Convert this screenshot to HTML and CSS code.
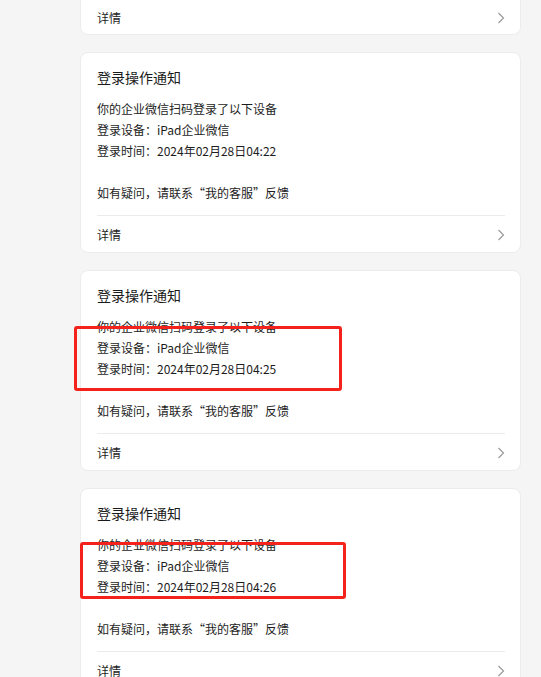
FILE: index.html
```html
<!DOCTYPE html>
<html lang="zh-CN">
<head>
<meta charset="utf-8">
<link rel="stylesheet" href="styles.css">
</head>
<body>
<div class="feed">
  <div class="card partial">
    <div class="footer"><span>详情</span><svg class="chev" width="8" height="12" viewBox="0 0 8 12"><polyline points="1.5,1 6.5,6 1.5,11" fill="none" stroke="#9a9a9a" stroke-width="1.2"/></svg></div>
  </div>
  <div class="card">
    <div class="title">登录操作通知</div>
    <div class="body">
      <div class="line">你的企业微信扫码登录了以下设备</div>
      <div class="line">登录设备：iPad企业微信</div>
      <div class="line">登录时间：2024年02月28日04:22</div>
      <div class="line blank"></div>
      <div class="line">如有疑问，请联系“我的客服”反馈</div>
    </div>
    <div class="footer"><span>详情</span><svg class="chev" width="8" height="12" viewBox="0 0 8 12"><polyline points="1.5,1 6.5,6 1.5,11" fill="none" stroke="#9a9a9a" stroke-width="1.2"/></svg></div>
  </div>
  <div class="card">
    <div class="mark mark-a"></div>
    <div class="title">登录操作通知</div>
    <div class="body">
      <div class="line">你的企业微信扫码登录了以下设备</div>
      <div class="line">登录设备：iPad企业微信</div>
      <div class="line">登录时间：2024年02月28日04:25</div>
      <div class="line blank"></div>
      <div class="line">如有疑问，请联系“我的客服”反馈</div>
    </div>
    <div class="footer"><span>详情</span><svg class="chev" width="8" height="12" viewBox="0 0 8 12"><polyline points="1.5,1 6.5,6 1.5,11" fill="none" stroke="#9a9a9a" stroke-width="1.2"/></svg></div>
  </div>
  <div class="card">
    <div class="mark mark-b"></div>
    <div class="title">登录操作通知</div>
    <div class="body">
      <div class="line">你的企业微信扫码登录了以下设备</div>
      <div class="line">登录设备：iPad企业微信</div>
      <div class="line">登录时间：2024年02月28日04:26</div>
      <div class="line blank"></div>
      <div class="line">如有疑问，请联系“我的客服”反馈</div>
    </div>
    <div class="footer"><span>详情</span><svg class="chev" width="8" height="12" viewBox="0 0 8 12"><polyline points="1.5,1 6.5,6 1.5,11" fill="none" stroke="#9a9a9a" stroke-width="1.2"/></svg></div>
  </div>
</div>
</body>
</html>
```

FILE: styles.css
```css
html, body {
  margin: 0;
  padding: 0;
  background: #f5f5f5;
  overflow: hidden;
  height: 677px;
}
body {
  font-family: "Noto Sans CJK SC", "Microsoft YaHei", sans-serif;
  color: #1d1d1d;
}
.feed {
  display: flex;
  flex-direction: column;
  gap: 17px;
  padding-left: 80px;
  width: 441px;
}
.card {
  position: relative;
  box-sizing: border-box;
  width: 441px;
  height: 201px;
  background: #fff;
  border: 1px solid #ececec;
  border-radius: 8px;
  padding: 14px 15px 0 16px;
  display: flex;
  flex-direction: column;
}
.card.partial {
  height: 35px;
  border-top: none;
  border-top-left-radius: 0;
  border-top-right-radius: 0;
  padding-top: 0;
}
.card.partial .footer {
  margin-top: 0;
  border-top: none;
  height: 34px;
}
.title {
  font-size: 14px;
  line-height: 20px;
  color: #1a1a1a;
}
.body {
  margin-top: 11px;
  font-size: 12px;
  line-height: 21px;
  color: #1d1d1d;
}
.line.blank {
  height: 21px;
}
.footer {
  margin-top: 12px;
  border-top: 1px solid #ebebeb;
  height: 37px;
  display: flex;
  align-items: center;
  justify-content: space-between;
  font-size: 12px;
  color: #1d1d1d;
}
.chev {
  display: block;
  margin-top: 2px;
}
.mark {
  position: absolute;
  border: 3px solid #f5221c;
  border-radius: 3px;
  box-sizing: border-box;
}
.mark-a {
  left: -7px;
  top: 55px;
  width: 268px;
  height: 65px;
}
.mark-b {
  left: -1px;
  top: 53px;
  width: 266px;
  height: 57px;
}
```
